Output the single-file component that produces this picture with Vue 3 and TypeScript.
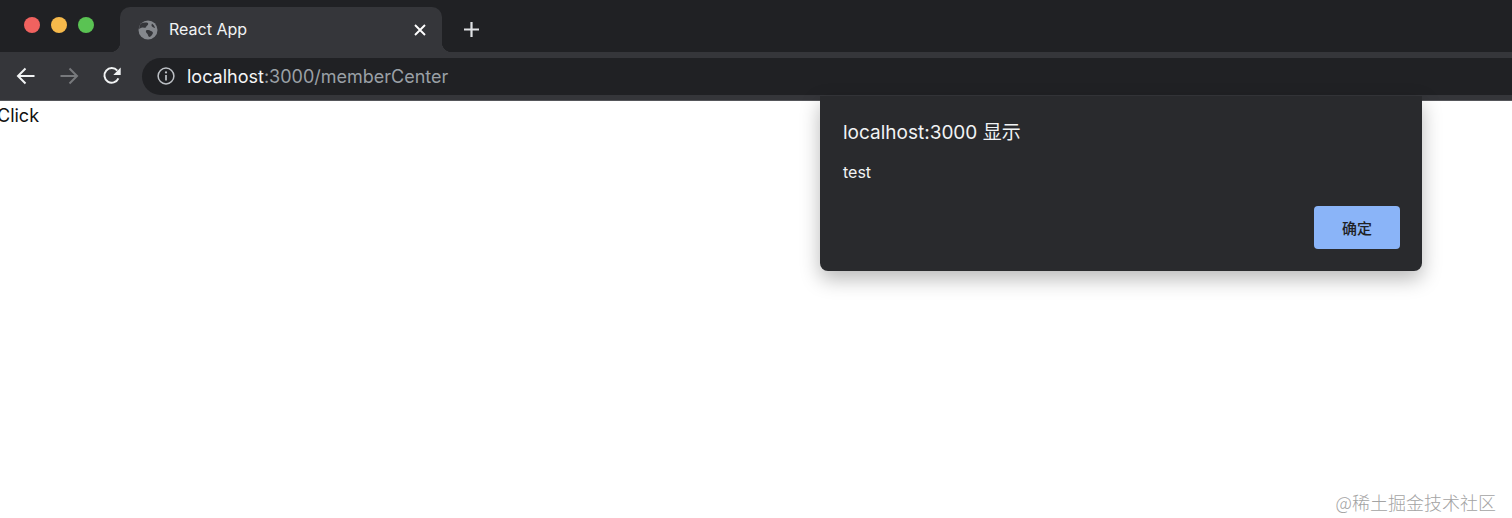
<script setup lang="ts">
const trafficLights: string[] = ["red", "yellow", "green"];
const host = "localhost";
const rest = ":3000/memberCenter";
</script>

<template>
	<div class="window">
		<div class="tabstrip">
			<div class="lights">
				<span v-for="c in trafficLights" :key="c" :class="['light', c]"></span>
			</div>
			<div class="tab">
				<svg class="globe" width="20" height="20" viewBox="0 0 20 20">
					<circle cx="10" cy="10" r="9.5" fill="#85888d" />
					<path d="M3 3.5c2.5-1 5-1.2 7-.4 .6 1.2-.2 2.6-1.6 3.2-.3 1.6-1.8 1.8-3.2 1.2C3.600 7 2 8.200 1.400 9.200 1 7 1.700 5 3 3.500Z" fill="#35363a" />
					<path d="M8 10.500c1.800-.8 3.500-.6 4.800.4 1.200.2 2.200 1 2.200 2.200-.6 1.800-2 3.400-3.700 4-1-.6-1.300-2-1.800-3.100C8.700 13 7.400 12 8 10.500Z" fill="#35363a" />
					<path d="M14 3.500c1.500 1 2.600 2.800 3 4.500-1.200-.2-2.600-.8-3.400-2-.2-1 0-1.800.4-2.500Z" fill="#35363a" />
				</svg>
				<span class="tab-title">React App</span>
				<svg class="close" width="12" height="12" viewBox="0 0 12 12">
					<path d="M1 1l10 10M11 1L1 11" stroke="#fff" stroke-width="1.900" fill="none" />
				</svg>
			</div>
			<svg class="newtab" width="17" height="17" viewBox="0 0 17 17">
				<path d="M8.500 1v15M1 8.500h15" stroke="#dfe1e4" stroke-width="2.200" fill="none" />
			</svg>
		</div>

		<div class="toolbar">
			<svg class="nav back" width="20" height="18" viewBox="0 0 20 18">
				<path d="M18.500 9H2M9.500 1.500L2 9l7.500 7.500" stroke="#f1f3f4" stroke-width="2" fill="none" />
			</svg>
			<svg class="nav forward" width="20" height="18" viewBox="0 0 20 18">
				<path d="M1.500 9H18M10.500 1.500L18 9l-7.500 7.500" stroke="#77797c" stroke-width="2" fill="none" />
			</svg>
			<svg class="nav reload" width="20" height="20" viewBox="0 0 20 20">
				<path d="M16.400 12.400A7.300 7.300 0 1 1 15.300 4.700" stroke="#f1f3f4" stroke-width="2" fill="none" />
				<path d="M18.700 1.600v7.400h-7.400Z" fill="#f1f3f4" />
			</svg>
			<div class="omnibox">
				<svg class="info" width="18" height="18" viewBox="0 0 18 18">
					<circle cx="9" cy="9" r="7.900" stroke="#bdc1c6" stroke-width="1.500" fill="none" />
					<path d="M9 8v5.500" stroke="#bdc1c6" stroke-width="1.700" />
					<circle cx="9" cy="5.400" r="1.100" fill="#bdc1c6" />
				</svg>
				<span class="url"><span class="host">{{ host }}</span>{{ rest }}</span>
			</div>
		</div>

		<div class="page">Click</div>

		<div class="dialog">
			<div class="dialog-title">localhost:3000 显示</div>
			<div class="dialog-msg">test</div>
			<div class="dialog-actions">
				<button class="ok">确定</button>
			</div>
		</div>

		<div class="watermark">@稀土掘金技术社区</div>
	</div>
</template>

<style scoped>
.window {
	position: relative;
	width: 1512px;
	height: 518px;
	overflow: hidden;
	background: #fff;
	font-family: Inter, "Liberation Sans", "Noto Sans CJK SC", sans-serif;
}

.tabstrip {
	height: 52px;
	background: #202124;
	display: flex;
	align-items: flex-end;
	box-sizing: border-box;
}

.lights {
	width: 120px;
	height: 52px;
	box-sizing: border-box;
	padding: 17px 0 0 24px;
	display: flex;
	gap: 11px;
	flex-shrink: 0;
}

.light {
	width: 16px;
	height: 16px;
	border-radius: 50%;
}
.light.red {
	background: #f0625f;
}
.light.yellow {
	background: #f6b94b;
}
.light.green {
	background: #5ac353;
}

.tab {
	width: 322px;
	height: 45px;
	background: #35363a;
	border-radius: 10px 10px 0 0;
	display: flex;
	align-items: center;
	box-sizing: border-box;
	padding: 0 16px 0 18px;
	position: relative;
}

.tab::before,
.tab::after {
	content: "";
	position: absolute;
	bottom: 0;
	width: 10px;
	height: 10px;
}
.tab::before {
	left: -10px;
	background: radial-gradient(circle at 0 0, transparent 10px, #35363a 10.500px);
}
.tab::after {
	right: -10px;
	background: radial-gradient(circle at 100% 0, transparent 10px, #35363a 10.500px);
}

.globe {
	flex-shrink: 0;
}

.tab-title {
	margin-left: 11px;
	flex: 1;
	color: #f1f3f4;
	font-size: 16px;
	line-height: 45px;
}

.newtab {
	margin: 0 0 14px 21px;
}

.toolbar {
	height: 49px;
	background: #35363a;
	border-bottom: 1px solid #55565a;
	box-sizing: border-box;
	display: flex;
	align-items: center;
	padding-left: 16px;
}

.nav {
	flex-shrink: 0;
}
.forward {
	margin-left: 23px;
}
.reload {
	margin-left: 23px;
}

.omnibox {
	margin-left: 20px;
	flex: 1;
	height: 37px;
	background: #202124;
	border-radius: 18.500px 0 0 18.500px;
	display: flex;
	align-items: center;
	padding-left: 15px;
}

.url {
	margin-left: 12px;
	font-size: 18px;
	color: #9aa0a6;
	white-space: nowrap;
}
.host {
	color: #f5f6f7;
}

.page {
	font-size: 18px;
	line-height: 30px;
	margin-left: -3px;
	color: #111;
}

.dialog {
	position: absolute;
	left: 820px;
	top: 96px;
	width: 602px;
	height: 175px;
	box-sizing: border-box;
	background: #292a2d;
	border-radius: 0 0 8px 8px;
	box-shadow: 0 8px 20px rgba(0, 0, 0, 0.28);
	padding: 24px 22px 22px 23px;
	display: flex;
	flex-direction: column;
	color: #f1f3f4;
}

.dialog-title {
	font-size: 19px;
	line-height: 26px;
}

.dialog-msg {
	margin-top: 14px;
	font-size: 16px;
	line-height: 24px;
}

.dialog-actions {
	margin-top: auto;
	display: flex;
	justify-content: flex-end;
}

.ok {
	width: 86px;
	height: 43px;
	border: 0;
	border-radius: 4px;
	background: #8ab4f8;
	color: #202124;
	font: 500 15px Inter, "Noto Sans CJK SC", sans-serif;
}

.watermark {
	position: absolute;
	right: 16px;
	bottom: 3px;
	font-size: 18px;
	line-height: 26px;
	color: #a3a3a3;
	font-family: "Noto Sans CJK SC", sans-serif;
	font-weight: 300;
}
</style>
